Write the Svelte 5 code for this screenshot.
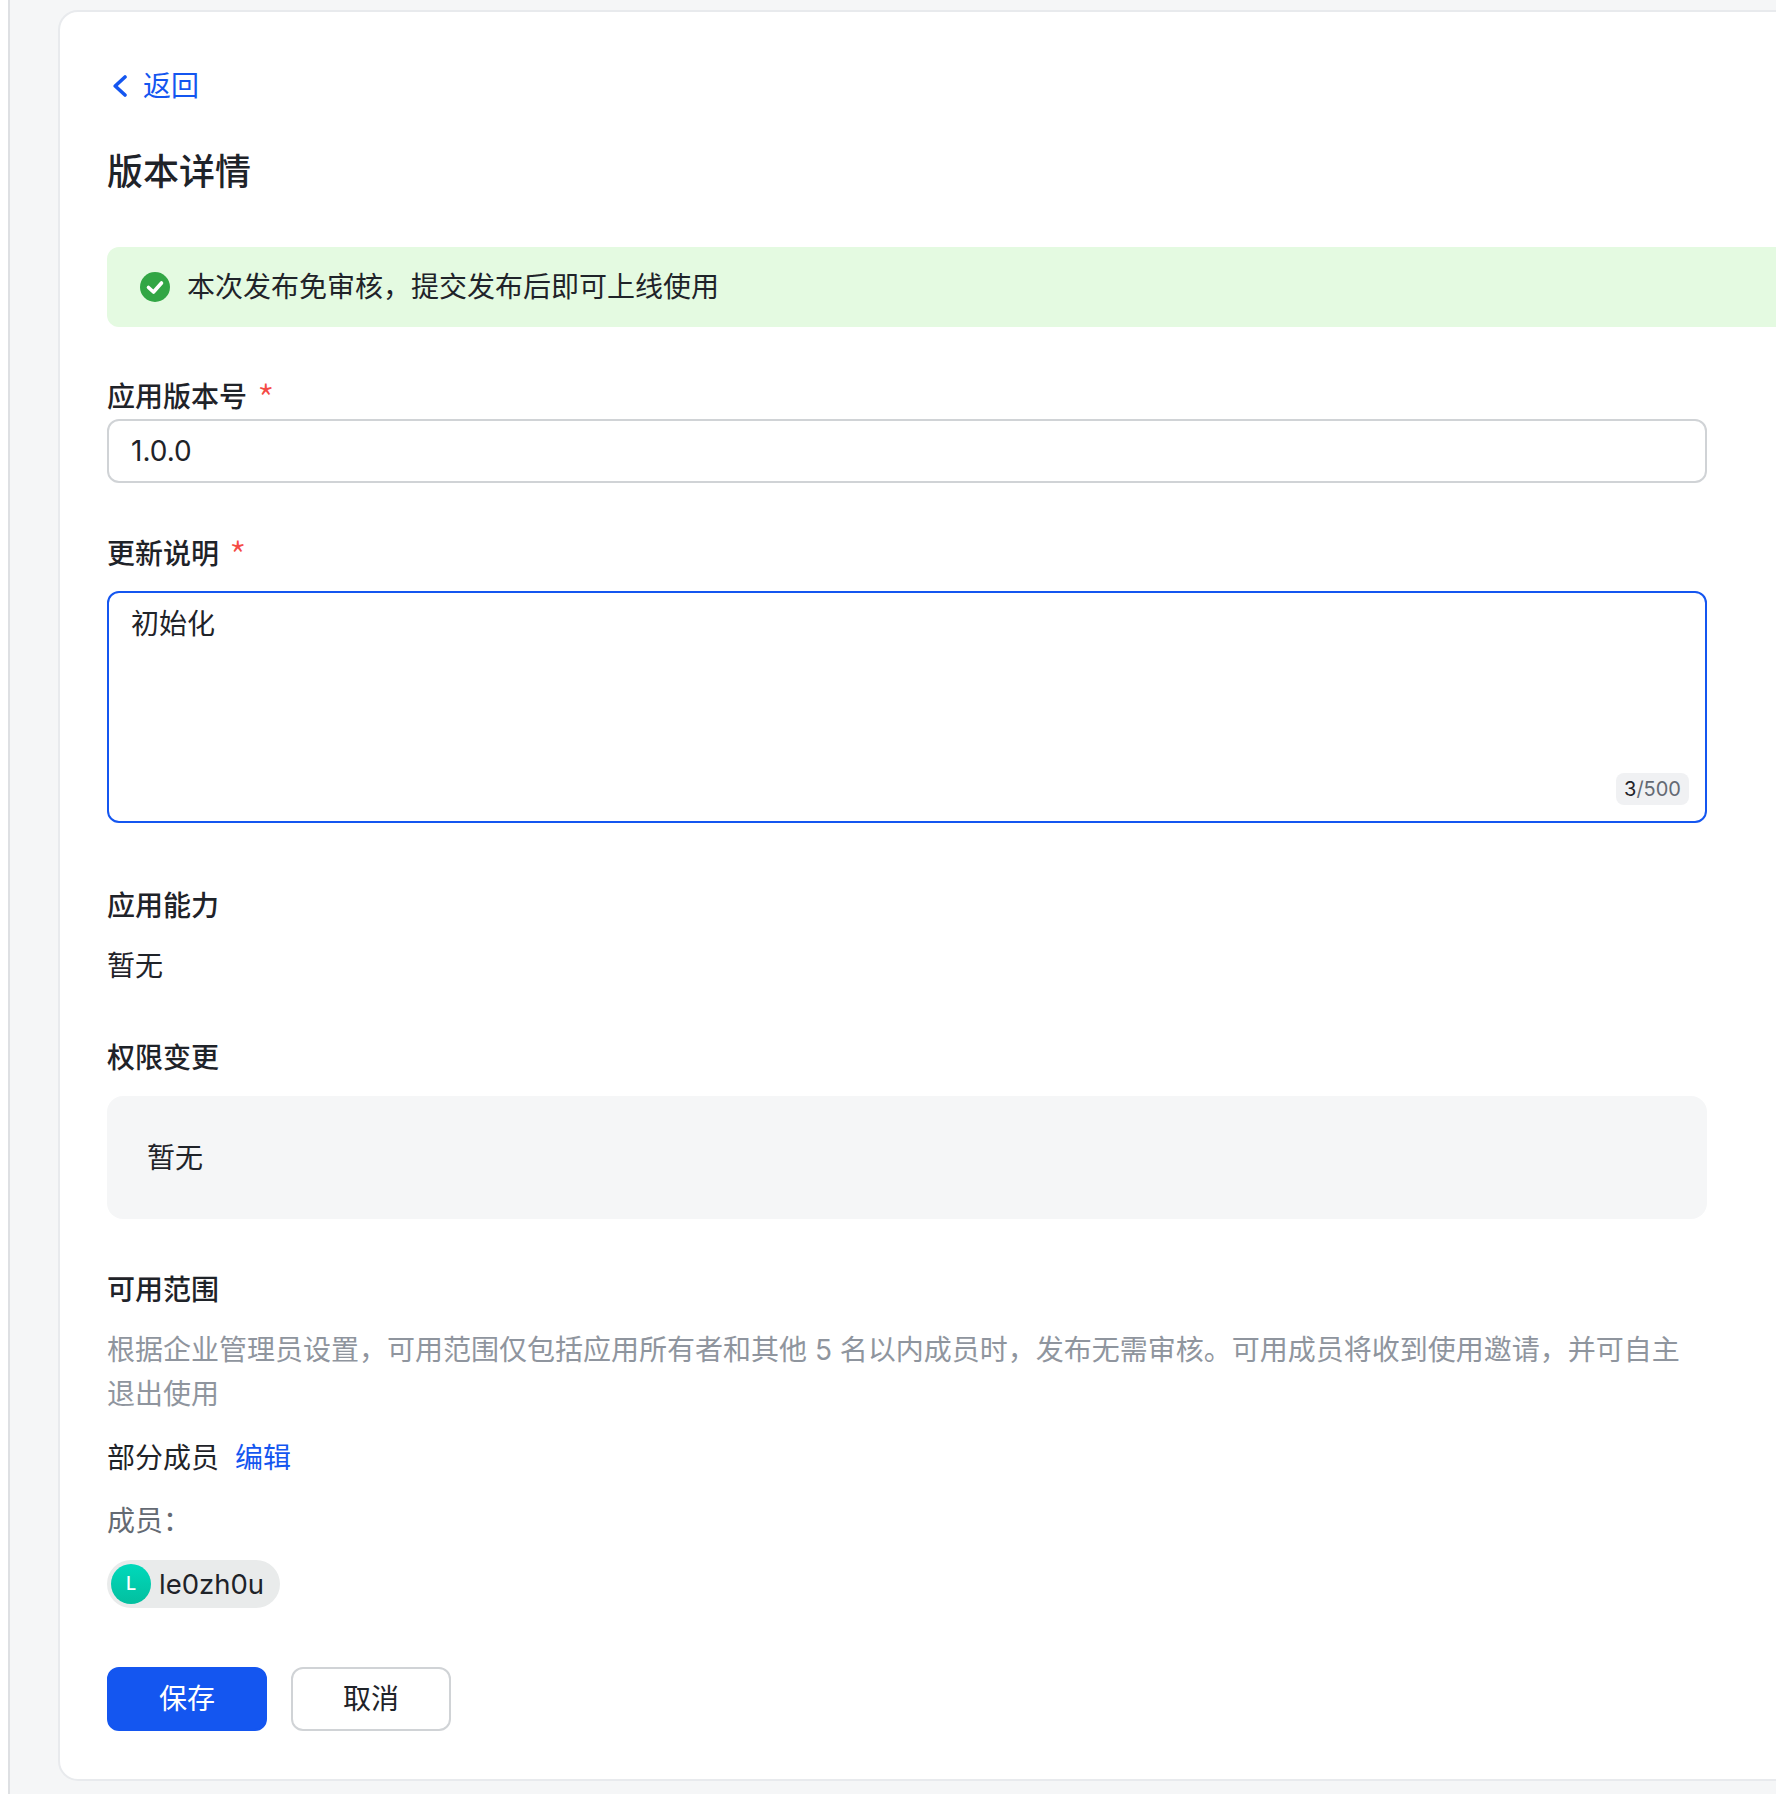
<script lang="ts">
	let version = $state('1.0.0');
	let notes = $state('初始化');
	const maxLength = 500;
</script>

<div class="page">
	<div class="rail"></div>
	<main class="main">
		<div class="card">
			<a class="back" href="#back">
				<svg width="16" height="24" viewBox="0 0 16 24" fill="none">
					<path d="M14 3 L4.2 12 L14 21" stroke="currentColor" stroke-width="3.6" stroke-linecap="round" stroke-linejoin="round" />
				</svg>
				<span>返回</span>
			</a>

			<h1 class="title">版本详情</h1>

			<div class="alert">
				<svg width="32" height="32" viewBox="0 0 32 32">
					<circle cx="16" cy="16" r="15" fill="#32a645" />
					<path d="M9.5 16.5 L14.5 21 L22.5 12" fill="none" stroke="#fff" stroke-width="3.6" stroke-linecap="round" stroke-linejoin="round" />
				</svg>
				<span>本次发布免审核，提交发布后即可上线使用</span>
			</div>

			<div class="form">
				<div class="label first">应用版本号<i class="star">*</i></div>
				<input class="field" bind:value={version} />

				<div class="label notes-label">更新说明<i class="star">*</i></div>
				<div class="notes">
					<textarea class="area" bind:value={notes}></textarea>
					<span class="counter"><b>{notes.length}</b>/{maxLength}</span>
				</div>

				<div class="label ability">应用能力</div>
				<div class="plain">暂无</div>

				<div class="label perm">权限变更</div>
				<div class="perm-box">暂无</div>

				<div class="label range">可用范围</div>
				<p class="desc">根据企业管理员设置，可用范围仅包括应用所有者和其他 5 名以内成员时，发布无需审核。可用成员将收到使用邀请，并可自主退出使用</p>

				<div class="scope">
					<span>部分成员</span>
					<a href="#edit">编辑</a>
				</div>

				<div class="members-label">成员：</div>
				<div class="chip">
					<span class="avatar">L</span>
					<span>le0zh0u</span>
				</div>

				<div class="actions">
					<button class="btn primary">保存</button>
					<button class="btn">取消</button>
				</div>
			</div>
		</div>
	</main>
</div>

<style>
	:global(body) {
		margin: 0;
		background: #f5f6f7;
		overflow: hidden;
	}

	.page {
		display: flex;
		height: 1794px;
		overflow: hidden;
		font-family: Inter, "Noto Sans CJK SC", sans-serif;
		font-size: 28px;
		line-height: 44px;
		color: #1f2329;
	}

	.rail {
		flex: none;
		width: 8px;
		background: #fff;
		border-right: 2px solid #dee0e3;
	}

	.main {
		flex: none;
		padding: 10px 0 0 48px;
	}

	.card {
		box-sizing: border-box;
		width: 1800px;
		height: 1771px;
		padding: 52px 0 0 47px;
		background: #fff;
		border: 2px solid #e8eaed;
		border-radius: 20px;
	}

	.back {
		display: flex;
		align-items: center;
		gap: 16px;
		height: 44px;
		color: #1456f0;
		text-decoration: none;
		padding-left: 4px;
	}

	.title {
		margin: 42px 0 0;
		font-size: 36px;
		line-height: 44px;
		font-weight: 500;
	}

	.alert {
		display: flex;
		align-items: center;
		gap: 16px;
		height: 80px;
		margin-top: 53px;
		padding-left: 32px;
		background: #e4fae1;
		border-radius: 12px;
	}

	.form {
		width: 1600px;
	}

	.label {
		font-weight: 500;
		height: 44px;
	}

	.first { margin-top: 48px; }
	.notes-label { margin-top: 49px; }
	.ability { margin-top: 61px; }
	.perm { margin-top: 48px; }
	.range { margin-top: 49px; }

	.star {
		margin-left: 10px;
		color: #f54a45;
		font-family: "Noto Sans CJK SC", sans-serif;
		font-size: 40px;
		line-height: 0;
		font-style: normal;
		font-weight: 300;
		vertical-align: -8px;
	}

	.field,
	.area {
		display: block;
		box-sizing: border-box;
		width: 100%;
		margin: 0;
		background: #fff;
		color: inherit;
		font: inherit;
		outline: none;
		border-radius: 12px;
	}

	.field {
		height: 64px;
		padding: 0 22px;
		border: 2px solid #d0d3d6;
	}

	.notes {
		position: relative;
		margin-top: 15px;
	}

	.area {
		height: 232px;
		padding: 9px 22px;
		border: 2px solid #1456f0;
		resize: none;
	}

	.counter {
		position: absolute;
		right: 18px;
		bottom: 18px;
		padding: 0 8px;
		height: 32px;
		line-height: 32px;
		font-size: 20px;
		color: #646a73;
		background: #f0f1f3;
		border-radius: 8px;
	}

	.counter b {
		font-weight: 400;
		color: #1f2329;
	}

	.plain {
		margin-top: 16px;
	}

	.perm-box {
		display: flex;
		align-items: center;
		height: 123px;
		margin-top: 16px;
		padding-left: 40px;
		background: #f5f6f7;
		border-radius: 16px;
	}

	.desc {
		margin: 16px 0 0;
		color: #8f959e;
	}

	.scope {
		display: flex;
		gap: 16px;
		margin-top: 20px;
	}

	.scope a {
		color: #1456f0;
		text-decoration: none;
	}

	.members-label {
		margin-top: 19px;
		color: #646a73;
	}

	.chip {
		display: inline-flex;
		align-items: center;
		gap: 8px;
		height: 48px;
		margin-top: 17px;
		padding: 0 16px 0 4px;
		font-size: 27.5px;
		background: #e9ebeb;
		border-radius: 24px;
	}

	.avatar {
		display: flex;
		align-items: center;
		justify-content: center;
		width: 40px;
		height: 40px;
		font-size: 18px;
		font-weight: 500;
		color: #fff;
		border-radius: 50%;
		background: linear-gradient(180deg, #00d9bb, #03bf9f);
	}

	.actions {
		display: flex;
		gap: 24px;
		margin-top: 59px;
	}

	.btn {
		box-sizing: border-box;
		width: 160px;
		height: 64px;
		padding: 0;
		font: inherit;
		color: inherit;
		background: #fff;
		border: 2px solid #d0d3d6;
		border-radius: 12px;
	}

	.primary {
		color: #fff;
		background: #1456f0;
		border-color: #1456f0;
	}
</style>
